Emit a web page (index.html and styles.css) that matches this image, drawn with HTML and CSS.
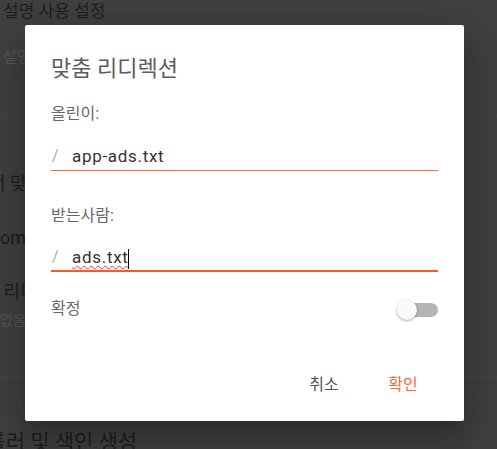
FILE: index.html
```html
<!DOCTYPE html>
<html lang="ko">
<head>
  <meta charset="UTF-8">
  <meta name="viewport" content="width=device-width, initial-scale=1.0">
  <title>맞춤 리디렉션</title>
  <link rel="stylesheet" href="styles.css">
</head>
<body>

  <!-- 설정 페이지 (대화상자 뒤, 어둡게 가려짐) -->
  <div class="page">
    <div class="bg-heading">설명 사용 설정</div>
    <div class="bg-sub">설명 사용 안함</div>
    <div class="bg-divider"></div>
    <div class="bg-item bg-404">서 맞춤 404</div>
    <div class="bg-item bg-url">om</div>
    <div class="bg-item bg-redirect">맞춤 리디렉션</div>
    <div class="bg-none">없음</div>
    <div class="bg-divider bg-divider-2"></div>
    <div class="bg-section">크롤러 및 색인 생성</div>
  </div>

  <div class="dialog">
    <h2 class="dialog-title">맞춤 리디렉션</h2>

    <label class="field-label" for="from">올린이:</label>
    <div class="field">
      <span class="field-slash">/</span>
      <span class="field-value" id="from">app-ads.txt</span>
    </div>

    <label class="field-label label-to" for="to">받는사람:</label>
    <div class="field field-focused">
      <span class="field-slash">/</span>
      <span class="field-value" id="to"><span class="misspelled">ads.txt</span><span class="caret"></span></span>
    </div>

    <div class="switch-row">
      <span class="field-label">확정</span>
      <span class="switch">
        <span class="switch-track"></span>
        <span class="switch-thumb"></span>
      </span>
    </div>

    <div class="actions">
      <button class="btn">취소</button>
      <button class="btn btn-primary">확인</button>
    </div>
  </div>

</body>
</html>
```

FILE: styles.css
```css
body {
  margin: 0;
  width: 497px;
  height: 449px;
  overflow: hidden;
  background-color: #404040;
  font-family: Roboto, "Noto Sans CJK KR", sans-serif;
  position: relative;
}

/* fundo */
.page {
  color: #1e1e1e;
}
.bg-heading {
  font-size: 17px;
  line-height: 22px;
  padding-left: 3px;
}
.bg-sub {
  margin-top: 25px;
  font-size: 15px;
  line-height: 20px;
  padding-left: 3px;
  color: #555;
}
.bg-divider {
  margin-top: 48px;
  height: 1px;
  background-color: #474747;
}
.bg-item {
  font-size: 18px;
  line-height: 24px;
  white-space: nowrap;
}
.bg-404 {
  margin-top: 56px;
  margin-left: -11px;
}
.bg-url {
  margin-top: 30px;
}
.bg-redirect {
  margin-top: 30px;
  margin-left: -34px;
}
.bg-none {
  margin-top: 7px;
  font-size: 14px;
  line-height: 18px;
  color: #555;
}
.bg-divider-2 {
  margin-top: 48px;
}
.bg-section {
  margin-top: 50px;
  margin-left: -33px;
  font-size: 21px;
  line-height: 28px;
  white-space: nowrap;
}

/* dialog */
.dialog {
  position: absolute;
  left: 25px;
  top: 25px;
  width: 439px;
  height: 396px;
  box-sizing: border-box;
  padding: 30px 26px 20px 26px;
  background-color: #fff;
  border-radius: 2px;
  box-shadow: 0 11px 15px -7px rgba(0, 0, 0, 0.2), 0 24px 38px 3px rgba(0, 0, 0, 0.14), 0 9px 46px 8px rgba(0, 0, 0, 0.12);
  display: flex;
  flex-direction: column;
}
.dialog-title {
  margin: 0;
  font-size: 22px;
  line-height: 28px;
  font-weight: 400;
  color: #5c5c5c;
}
.field-label {
  display: block;
  margin-top: 21px;
  font-size: 16px;
  line-height: 20px;
  color: #666;
}
.label-to {
  margin-top: 35px;
}
.field {
  display: flex;
  margin-top: 20px;
  line-height: 24px;
  padding-bottom: 2px;
  border-bottom: 1px solid #ff6a3d;
}
.field-focused {
  margin-top: 19px;
  padding-bottom: 1px;
  border-bottom: 2px solid #ff5722;
}
.field-slash {
  width: 20px;
  padding-left: 1px;
  font-size: 16px;
  color: #aaa;
}
.field-value {
  font-size: 17px;
  letter-spacing: 0.7px;
  color: #333;
}
.misspelled {
  text-decoration: underline wavy #e53935;
  text-decoration-thickness: 1px;
  text-underline-offset: 2px;
}
.caret {
  display: inline-block;
  width: 0;
  height: 20px;
  border-left: 1px solid #000;
  vertical-align: middle;
  margin-left: -1px;
}

.switch-row {
  display: flex;
  align-items: center;
  justify-content: space-between;
  margin-top: 25px;
  height: 24px;
}
.switch-row .field-label {
  margin-top: 0;
}
.switch {
  position: relative;
  width: 38px;
  height: 14px;
  margin-top: 2px;
}
.switch-track {
  display: block;
  width: 38px;
  height: 14px;
  border-radius: 7px;
  background-color: #b5b5b5;
}
.switch-thumb {
  position: absolute;
  left: -3px;
  top: -3px;
  width: 20px;
  height: 20px;
  border-radius: 50%;
  background-color: #fafafa;
  box-shadow: 0 1px 3px rgba(0, 0, 0, 0.35);
}

.actions {
  margin-top: auto;
  display: flex;
  justify-content: flex-end;
  gap: 15px;
  padding-right: 3px;
}
.btn {
  height: 36px;
  min-width: 64px;
  padding: 0 16px;
  border: none;
  background: none;
  font-family: Roboto, "Noto Sans CJK KR", sans-serif;
  font-size: 16px;
  font-weight: 400;
  color: #555;
  cursor: pointer;
}
.btn-primary {
  color: #ff6a3d;
}
```
